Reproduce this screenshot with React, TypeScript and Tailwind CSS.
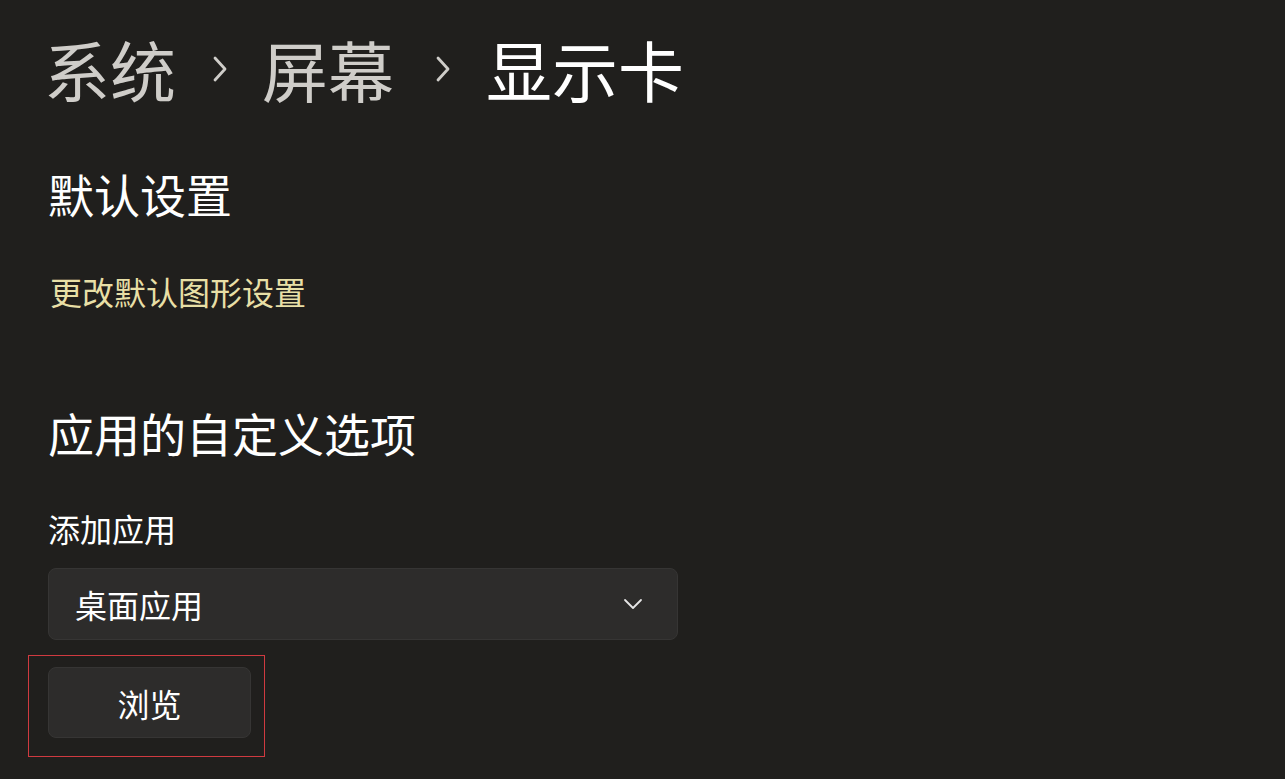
const ChevronRight = () => (
  <svg width="18" height="28" viewBox="0 0 18 28" fill="none" className="text-[#cfcdc9]">
    <path d="M4 3l10 11-10 11" stroke="currentColor" strokeWidth="2.8" strokeLinecap="round" strokeLinejoin="round" />
  </svg>
);

const ChevronDown = () => (
  <svg width="20" height="12" viewBox="0 0 20 12" fill="none" className="text-[#e6e6e6]">
    <path d="M2 2l8 8 8-8" stroke="currentColor" strokeWidth="1.8" strokeLinecap="round" strokeLinejoin="round" />
  </svg>
);

const App = () => {
  return (
    <div
      className="w-[1285px] h-[779px] overflow-hidden bg-[#201f1d] text-white pl-[48px]"
      style={{ fontFamily: '"Noto Sans CJK SC", "Noto Sans", sans-serif' }}
    >
      {/* breadcrumb */}
      <div className="flex items-center pt-[23px] h-[112px] ml-[-4px]">
        <span className="text-[66px] leading-none text-[#cfcdc9]">系统</span>
        <span className="ml-[35px] mr-[33px] mt-[2px]">
          <ChevronRight />
        </span>
        <span className="text-[66px] leading-none text-[#cfcdc9]">屏幕</span>
        <span className="ml-[40px] mr-[34px] mt-[2px]">
          <ChevronRight />
        </span>
        <span className="text-[66px] leading-none text-white">显示卡</span>
      </div>

      <h2 className="mt-[58px] text-[46px] leading-none font-normal">默认设置</h2>
      <div className="mt-[59px] text-[32px] leading-none text-[#e8dfa6] ml-[2px]">更改默认图形设置</div>

      <h2 className="mt-[102px] text-[46px] leading-none font-normal">应用的自定义选项</h2>

      <div className="mt-[57px] text-[32px] leading-none">添加应用</div>

      <div className="mt-[24px] w-[630px] h-[72px] rounded-[8px] bg-[#2d2c2b] border border-[#363534] flex items-center justify-between pl-[26px] pr-[34px]">
        <span className="text-[32px] leading-none">桌面应用</span>
        <ChevronDown />
      </div>

      {/* highlight box around the button */}
      <div className="mt-[16px] ml-[-19px] w-[235px] h-[100px] ring-1 ring-[#d03a40] pl-[19px] pt-[11px]">
        <button className="w-[203px] h-[71px] rounded-[8px] bg-[#2d2c2b] border border-[#363534] flex items-center justify-center text-[32px] leading-none text-white">
          浏览
        </button>
      </div>
    </div>
  );
};

export default App;
